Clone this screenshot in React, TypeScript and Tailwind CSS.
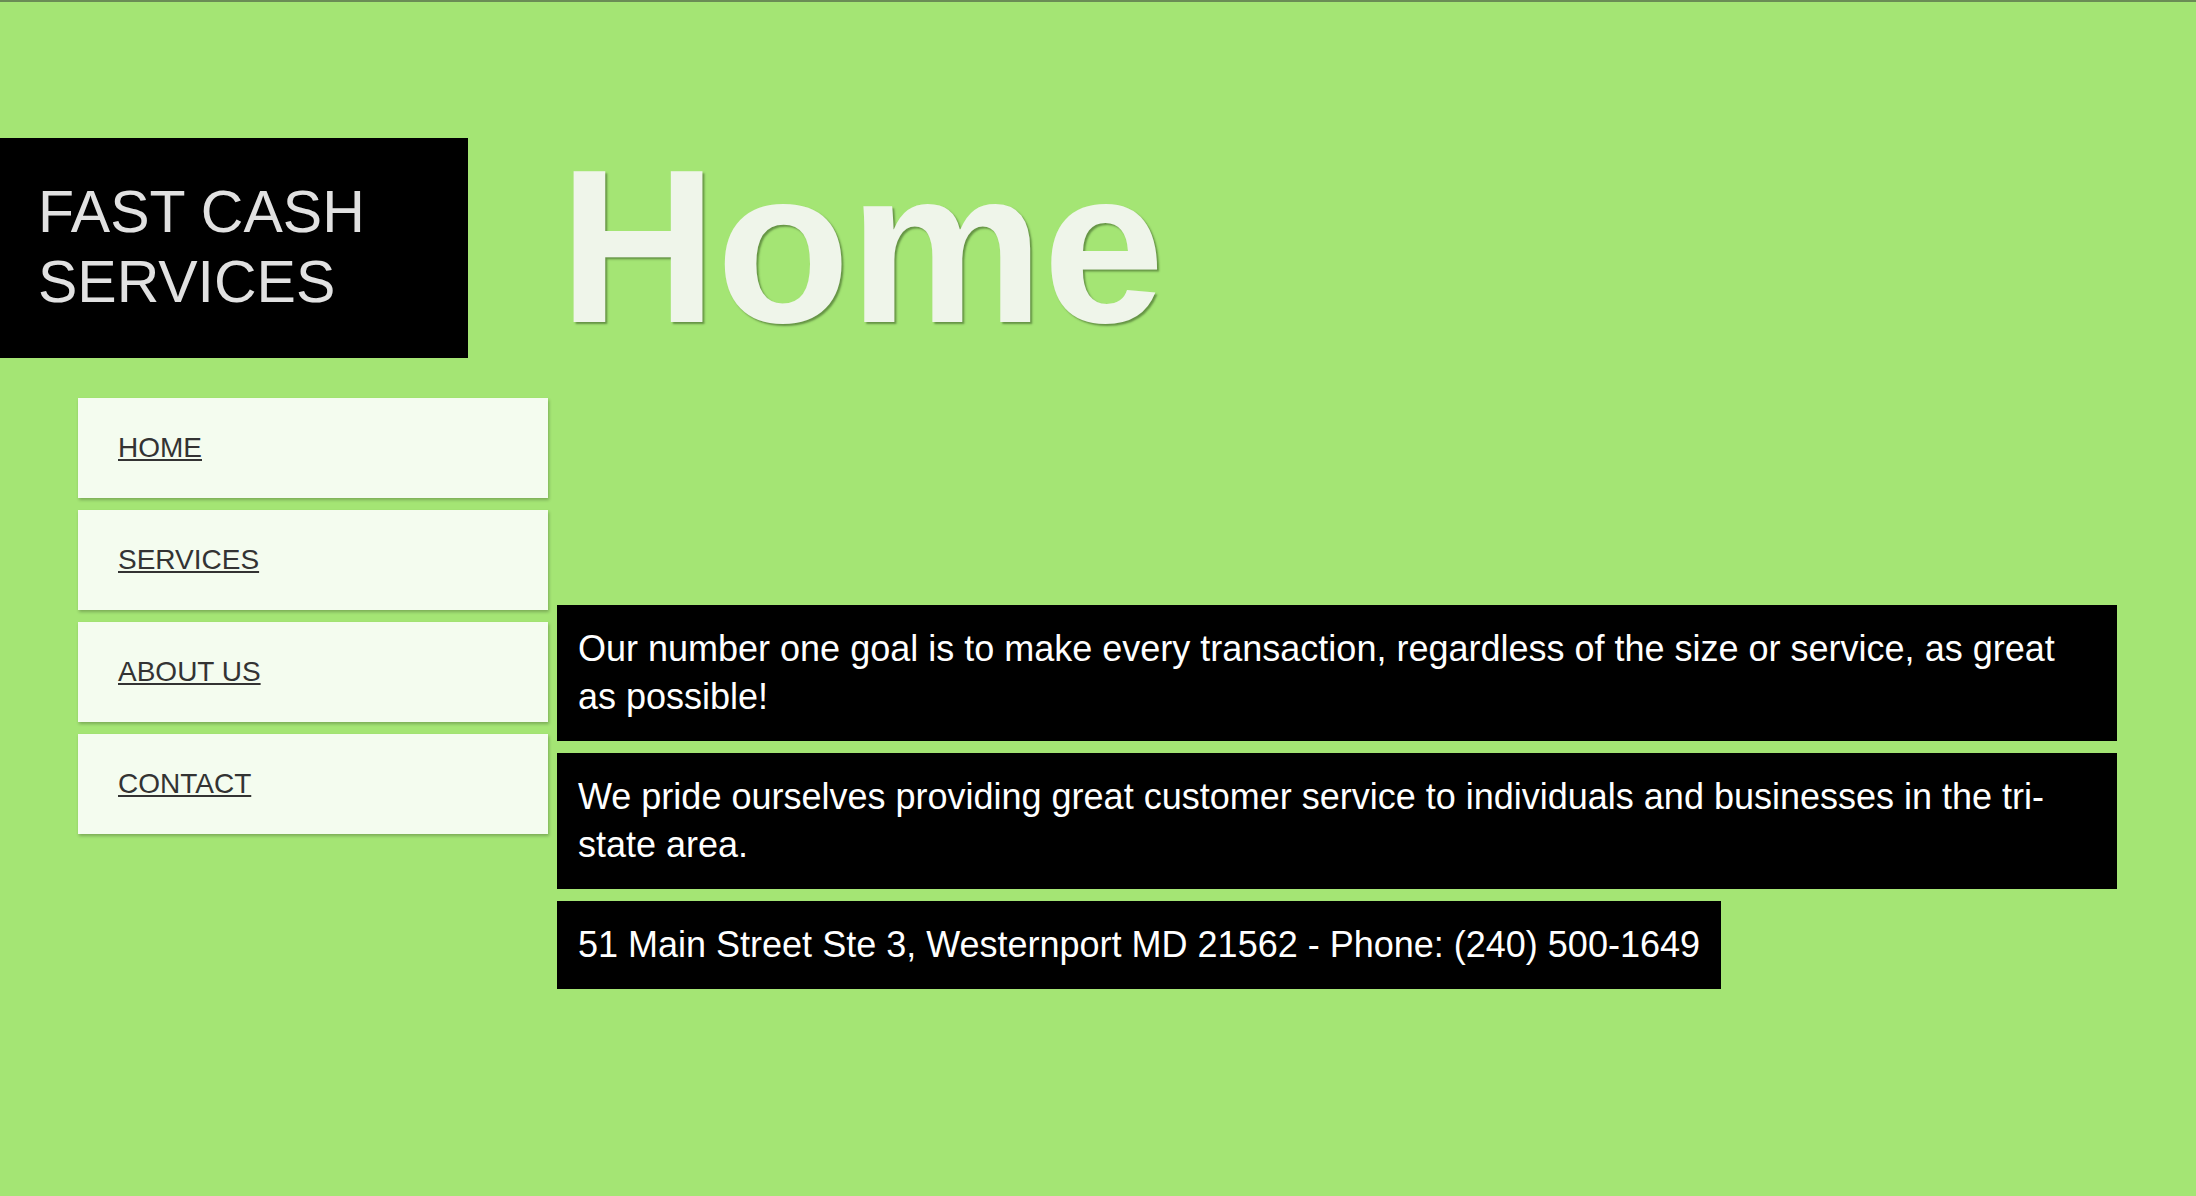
const navItems = ["HOME", "SERVICES", "ABOUT US", "CONTACT"];

const blurbs = [
  "Our number one goal is to make every transaction, regardless of the size or service, as great as possible!",
  "We pride ourselves providing great customer service to individuals and businesses in the tri-state area.",
];

export default function App() {
  return (
    <div className="min-h-screen w-full bg-[#a4e574] font-['Liberation_Sans',Arial,sans-serif]">
      <div className="h-[2px] bg-[#6a8c55]" />
      <div className="flex pt-[136px] pb-[200px]">
        {/* Left column: logo + nav */}
        <div className="w-[557px] shrink-0">
          <div className="w-[468px] h-[220px] bg-black pl-[38px] pt-[39px]">
            <h1 className="text-[59px] leading-[70px] text-[#e1e1e1]">
              FAST CASH
              <br />
              SERVICES
            </h1>
          </div>

          <nav className="mt-[40px] ml-[78px] w-[470px] flex flex-col gap-[12px]">
            {navItems.map((item) => (
              <div
                key={item}
                className="h-[100px] flex items-center pl-[40px] bg-[#f4fcef] shadow-[1px_2px_3px_rgba(0,0,0,0.25)]"
              >
                <a href="#" className="text-[28px] text-[#333333] underline">
                  {item}
                </a>
              </div>
            ))}
          </nav>
        </div>

        {/* Right column: title + content */}
        <div className="flex-1 pr-[79px]">
          <h1 className="-mt-[1px] ml-[2px] text-[219px] leading-none font-bold text-[#eff5ea] tracking-[-1px] [text-shadow:2px_2px_2px_rgba(50,80,30,0.55)]">
            Home
          </h1>

          <div className="mt-[249px] flex flex-col items-start gap-[12px]">
            {blurbs.map((text) => (
              <p
                key={text}
                className="w-full bg-black text-white text-[36px] leading-[48px] py-[20px] pl-[21px] pr-[40px]"
              >
                {text}
              </p>
            ))}
            <p className="bg-black text-white text-[36px] leading-[48px] py-[20px] pl-[21px] pr-[21px]">
              51 Main Street Ste 3, Westernport MD 21562 - Phone: (240) 500-1649
            </p>
          </div>
        </div>
      </div>
    </div>
  );
}
